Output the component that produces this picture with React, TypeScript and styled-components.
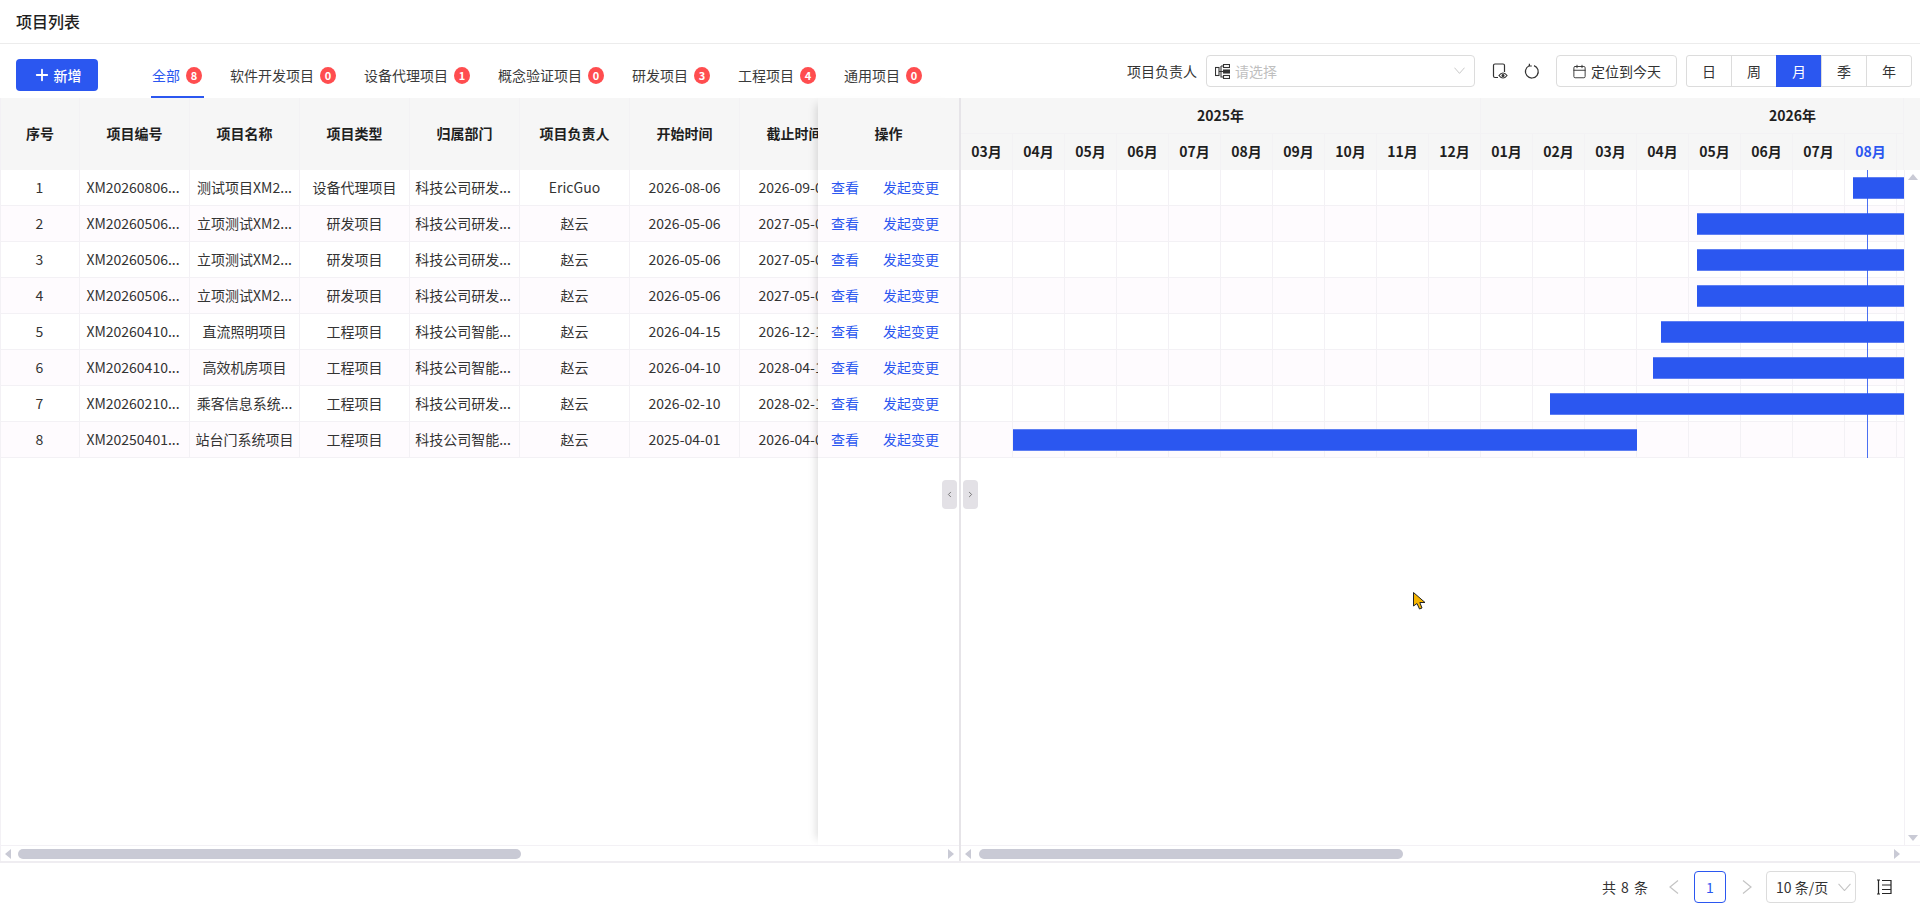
import React, { FC } from 'react';
import styled, { createGlobalStyle } from 'styled-components';
import { Calendar, ChevronLeft, ChevronRight, Plus } from 'lucide-react';

const BLUE = '#2b57f0';
const LINE = '#f3f1f5';
const MONTH_WIDTH = 52;
const TODAY = '2026-08-14';

const GlobalStyle = createGlobalStyle`
  html, body {
    margin: 0;
    padding: 0;
    height: 100%;
    background: #fff;
    color: #262626;
    font-family: "Noto Sans CJK SC", "Liberation Sans", sans-serif;
    font-size: 14px;
    overflow: hidden;
  }
  * { box-sizing: border-box; }
`;

const Page = styled.div`
  position: relative;
  display: flex;
  flex-direction: column;
  height: 911px;
  overflow: hidden;
`;

const TitleBar = styled.div`
  flex: 0 0 44px;
  display: flex;
  align-items: center;
  padding: 0 16px 2px;
  border-bottom: 1px solid #ececec;
  font-size: 16px;
  font-weight: 500;
  color: #1f1f1f;
`;

const Toolbar = styled.div`
  flex: 0 0 54px;
  display: flex;
  align-items: center;
  padding: 0 8px 0 16px;
`;

const AddButton = styled.div`
  width: 82px;
  height: 32px;
  margin-top: 8px;
  display: flex;
  align-items: center;
  justify-content: center;
  gap: 3px;
  border-radius: 4px;
  background: ${BLUE};
  color: #fff;
  font-weight: 500;
`;

const Tabs = styled.div`
  align-self: stretch;
  display: flex;
  gap: 25px;
  margin-left: 53px;
`;

const Tab = styled.div<{ $active?: boolean }>`
  display: flex;
  align-items: center;
  gap: 6px;
  padding: 10px 2px 0 1px;
  border-bottom: 2px solid ${(p) => (p.$active ? BLUE : 'transparent')};
  color: ${(p) => (p.$active ? BLUE : '#3a3a3a')};
  white-space: nowrap;
`;

const Badge = styled.span`
  width: 16px;
  height: 17px;
  display: flex;
  align-items: center;
  justify-content: center;
  border-radius: 50%;
  background: #ff4d4f;
  color: #fff;
  font-size: 11px;
  font-weight: 700;
`;

const ToolRight = styled.div`
  margin-left: auto;
  display: flex;
  align-items: center;
`;

const FieldLabel = styled.span`
  margin-right: 9px;
  color: #333;
  white-space: nowrap;
`;

const SelectBox = styled.div`
  width: 269px;
  height: 32px;
  display: flex;
  align-items: center;
  padding: 0 9px 0 8px;
  gap: 5px;
  border: 1px solid #dcdcdc;
  border-radius: 4px;
  color: #bfbfbf;
`;

const Caret = styled.span`
  margin-left: auto;
  display: flex;
  color: #c4c4c4;
`;

const IconButton = styled.span`
  display: flex;
  margin-left: ${(p: { $gap: number }) => p.$gap}px;
  color: #333;
`;

const TodayButton = styled.div`
  width: 121px;
  height: 32px;
  margin-left: 16px;
  display: flex;
  align-items: center;
  justify-content: center;
  gap: 4px;
  border: 1px solid #dcdcdc;
  border-radius: 4px;
  color: #333;
`;

const Segments = styled.div`
  display: flex;
  width: 226px;
  height: 32px;
  margin-left: 9px;
  border: 1px solid #dcdcdc;
  border-radius: 3px;
`;

const Segment = styled.div<{ $active?: boolean }>`
  flex: 1;
  display: flex;
  align-items: center;
  justify-content: center;
  background: ${(p) => (p.$active ? BLUE : 'transparent')};
  color: ${(p) => (p.$active ? '#fff' : '#333')};
  border-left: 1px solid ${(p) => (p.$active ? BLUE : '#dcdcdc')};
  margin: ${(p) => (p.$active ? '-1px 0' : '0')};
  &:first-child { border-left: 0; }
`;

const Workspace = styled.div`
  position: relative;
  flex: 1;
  display: flex;
  min-height: 0;
  border-bottom: 2px solid #efedf1;
`;

const TablePane = styled.div`
  flex: 0 0 959px;
  min-width: 0;
  display: flex;
  flex-direction: column;
  border-left: 1px solid ${LINE};
`;

const TableColumns = styled.div`
  flex: 1;
  min-height: 0;
  display: flex;
`;

const ScrollPart = styled.div`
  flex: 1;
  min-width: 0;
  overflow: hidden;
`;

const FixedPart = styled.div`
  flex: 0 0 141px;
  position: relative;
  background: #fff;
  box-shadow: -8px 0 8px -6px rgba(0, 0, 0, 0.13);
`;

const HeadRow = styled.div`
  display: flex;
  width: max-content;
  height: 72px;
  background: #f6f6f6;
`;

const HeadCell = styled.div<{ $w: number }>`
  flex: 0 0 ${(p) => p.$w}px;
  display: flex;
  align-items: center;
  justify-content: center;
  padding-bottom: 2px;
  border-right: 1px solid #f3f2f4;
  font-weight: 700;
  color: #1f1f1f;
`;

const BodyRow = styled.div<{ $even: boolean }>`
  display: flex;
  width: max-content;
  height: 36px;
  background: ${(p) => (p.$even ? '#fefbfe' : '#fff')};
  border-bottom: 1px solid ${LINE};
`;

const Cell = styled.div<{ $w: number; $pr: number }>`
  flex: 0 0 ${(p) => p.$w}px;
  width: ${(p) => p.$w}px;
  padding-right: ${(p) => p.$pr}px;
  line-height: 35px;
  text-align: center;
  white-space: nowrap;
  border-right: 1px solid ${LINE};
  color: #333;
`;

const FixedHead = styled(HeadCell)`
  height: 72px;
  background: #f6f6f6;
  border-right: 0;
`;

const ActionRow = styled.div<{ $even: boolean }>`
  height: 36px;
  display: flex;
  align-items: center;
  gap: 24px;
  padding: 0 0 1px 13px;
  background: ${(p) => (p.$even ? '#fefbfe' : '#fff')};
  border-bottom: 1px solid ${LINE};
`;

const ActionLink = styled.span`
  color: ${BLUE};
  white-space: nowrap;
`;

const Splitter = styled.div`
  flex: 0 0 2px;
  background: #e6e4e8;
`;

const CollapseButton = styled.div<{ $side: 'left' | 'right' }>`
  position: absolute;
  top: 382px;
  left: ${(p) => (p.$side === 'left' ? 942 : 963)}px;
  width: 15px;
  height: 29px;
  display: flex;
  align-items: center;
  justify-content: center;
  border-radius: 4px;
  background: #e3e1e6;
  color: #555;
`;

const GanttPane = styled.div`
  flex: 1;
  min-width: 0;
  display: flex;
  flex-direction: column;
`;

const GanttHead = styled.div`
  flex: 0 0 72px;
  background: #f6f6f6;
  padding-right: 16px;
`;

const Timeline = styled.div`
  height: 100%;
  overflow: hidden;
  border-right: 1px solid #f3f2f4;
`;

const YearRow = styled.div`
  display: flex;
  width: max-content;
  height: 35px;
`;

const YearCell = styled.div<{ $months: number }>`
  flex: 0 0 ${(p) => p.$months * MONTH_WIDTH}px;
  display: flex;
  align-items: center;
  justify-content: center;
  padding-bottom: 2px;
  border-right: 1px solid #f3f2f4;
  font-weight: 700;
  color: #1f1f1f;
`;

const MonthRow = styled.div`
  display: flex;
  width: max-content;
  height: 37px;
  border-top: 1px solid #f3f2f4;
`;

const MonthCell = styled.div<{ $now?: boolean }>`
  flex: 0 0 ${MONTH_WIDTH}px;
  display: flex;
  align-items: center;
  justify-content: center;
  padding-bottom: 2px;
  border-right: 1px solid #f3f2f4;
  font-weight: 700;
  color: ${(p) => (p.$now ? BLUE : '#1f1f1f')};
`;

const GanttMiddle = styled.div`
  flex: 1;
  min-height: 0;
  display: flex;
`;

const GanttBody = styled.div`
  flex: 1;
  min-width: 0;
`;

const GanttRows = styled.div`
  position: relative;
  overflow: hidden;
`;

const GanttRow = styled.div<{ $even: boolean }>`
  position: relative;
  height: 36px;
  border-bottom: 1px solid ${LINE};
  background-color: ${(p) => (p.$even ? '#fefbfe' : '#fff')};
  background-image: repeating-linear-gradient(
    to right,
    transparent 0 ${MONTH_WIDTH - 1}px,
    ${LINE} ${MONTH_WIDTH - 1}px ${MONTH_WIDTH}px
  );
`;

const Bar = styled.div`
  position: absolute;
  top: 7px;
  height: 22px;
  background: ${BLUE};
  box-shadow: inset 0 1px 0 #5f7ff3, inset 0 -1px 0 #5f7ff3;
`;

const TodayLine = styled.div`
  position: absolute;
  top: 0;
  bottom: 0;
  width: 1px;
  background: ${BLUE};
  opacity: 0.85;
`;

const VScroll = styled.div`
  flex: 0 0 16px;
  display: flex;
  flex-direction: column;
  align-items: center;
  justify-content: space-between;
  padding: 4px 0 4px;
  border-left: 1px solid ${LINE};
`;

const VArrow = styled.span<{ $dir: 'up' | 'down' }>`
  width: 0;
  height: 0;
  border-left: 5px solid transparent;
  border-right: 5px solid transparent;
  ${(p) => (p.$dir === 'up' ? 'border-bottom: 6px solid #c9cad5;' : 'border-top: 6px solid #c9cad5;')}
`;

const HScroll = styled.div<{ $right: number }>`
  flex: 0 0 16px;
  display: flex;
  align-items: center;
  padding: 0 ${(p) => p.$right}px 0 4px;
  border-top: 1px solid ${LINE};
`;

const HArrow = styled.span<{ $dir: 'left' | 'right' }>`
  width: 0;
  height: 0;
  border-top: 5px solid transparent;
  border-bottom: 5px solid transparent;
  ${(p) =>
    p.$dir === 'left'
      ? 'border-right: 6px solid #c9cad5;'
      : 'border-left: 6px solid #c9cad5; margin-left: auto;'}
`;

const Thumb = styled.div<{ $w: number; $gap: number }>`
  width: ${(p) => p.$w}px;
  height: 10px;
  margin-left: ${(p) => p.$gap}px;
  border-radius: 5px;
  background: #c9cad5;
`;

const Footer = styled.div`
  flex: 0 0 48px;
  display: flex;
  align-items: center;
  justify-content: flex-end;
  padding-right: 28px;
  color: #333;
`;

const TotalText = styled.span`
  word-spacing: 2px;
`;

const PageNav = styled.span<{ $gap: number }>`
  display: flex;
  margin-left: ${(p) => p.$gap}px;
  color: #c4c4c4;
`;

const PageNumber = styled.div`
  width: 32px;
  height: 32px;
  margin-left: 15px;
  display: flex;
  align-items: center;
  justify-content: center;
  border: 1px solid ${BLUE};
  border-radius: 4px;
  color: ${BLUE};
`;

const PageSize = styled.div`
  width: 90px;
  height: 32px;
  margin-left: 14px;
  display: flex;
  align-items: center;
  padding: 0 4px 0 9px;
  border: 1px solid #dcdcdc;
  border-radius: 4px;
  white-space: nowrap;
`;

const Pointer = styled.svg`
  position: absolute;
  left: 1412px;
  top: 591px;
`;

const columns = [
  { title: '序号', w: 79, pr: 1 },
  { title: '项目编号', w: 110, pr: 3 },
  { title: '项目名称', w: 110, pr: 0 },
  { title: '项目类型', w: 110, pr: 0 },
  { title: '归属部门', w: 110, pr: 3 },
  { title: '项目负责人', w: 110, pr: 0 },
  { title: '开始时间', w: 110, pr: 0 },
  { title: '截止时间', w: 110, pr: 0 },
];

const rows = [
  ['1', 'XM20260806...', '测试项目XM2...', '设备代理项目', '科技公司研发...', 'EricGuo', '2026-08-06', '2026-09-06'],
  ['2', 'XM20260506...', '立项测试XM2...', '研发项目', '科技公司研发...', '赵云', '2026-05-06', '2027-05-06'],
  ['3', 'XM20260506...', '立项测试XM2...', '研发项目', '科技公司研发...', '赵云', '2026-05-06', '2027-05-06'],
  ['4', 'XM20260506...', '立项测试XM2...', '研发项目', '科技公司研发...', '赵云', '2026-05-06', '2027-05-06'],
  ['5', 'XM20260410...', '直流照明项目', '工程项目', '科技公司智能...', '赵云', '2026-04-15', '2026-12-15'],
  ['6', 'XM20260410...', '高效机房项目', '工程项目', '科技公司智能...', '赵云', '2026-04-10', '2028-04-10'],
  ['7', 'XM20260210...', '乘客信息系统...', '工程项目', '科技公司研发...', '赵云', '2026-02-10', '2028-02-10'],
  ['8', 'XM20250401...', '站台门系统项目', '工程项目', '科技公司智能...', '赵云', '2025-04-01', '2026-04-01'],
];

const tabs = [
  { label: '全部', count: 8 },
  { label: '软件开发项目', count: 0 },
  { label: '设备代理项目', count: 1 },
  { label: '概念验证项目', count: 0 },
  { label: '研发项目', count: 3 },
  { label: '工程项目', count: 4 },
  { label: '通用项目', count: 0 },
];

const months = ['03', '04', '05', '06', '07', '08', '09', '10', '11', '12', '01', '02', '03', '04', '05', '06', '07', '08', '09'];

// 日期换算成时间轴上的像素位置，时间轴从 2025-03 开始
const dateToX = (date: string) => {
  const [y, m, d] = date.split('-').map(Number);
  const days = new Date(y, m, 0).getDate();
  return ((y - 2025) * 12 + m - 3 + (d - 1) / days) * MONTH_WIDTH;
};

const OrgIcon = () => (
  <svg width="15" height="15" viewBox="0 0 15 15" fill="none" stroke="#333" strokeWidth="1.1">
    <rect x="0.5" y="3.5" width="3.5" height="8" />
    <rect x="8.5" y="0.5" width="6" height="3" />
    <rect x="8.5" y="6" width="6" height="3" fill="#333" />
    <rect x="8.5" y="11.5" width="6" height="3" />
    <path d="M4 7.5H8.5M6 2V13H8.5M6 2H8.5" />
  </svg>
);

const PreviewIcon = () => (
  <svg width="16" height="16" viewBox="0 0 16 16" fill="none" stroke="#333" strokeWidth="1.2">
    <path d="M6 14.5H3a1.5 1.5 0 0 1-1.5-1.5V2.5A1.5 1.5 0 0 1 3 1h8a1.5 1.5 0 0 1 1.5 1.5V9" />
    <path d="M7 12.5c1.2-1.7 2.6-2.5 4-2.5s2.8.8 4 2.5c-1.2 1.7-2.6 2.5-4 2.5s-2.8-.8-4-2.5Z" />
    <circle cx="11" cy="12.5" r="1" fill="#333" />
  </svg>
);

const ReloadIcon = () => (
  <svg width="16" height="16" viewBox="0 0 16 16" fill="none" stroke="#333" strokeWidth="1.2">
    <path d="M10 2.6a6.4 6.4 0 1 1-4.8.2" />
    <path d="M5.4 0.8v2.2h2.4" />
  </svg>
);

const ColumnHeightIcon = () => (
  <svg width="16" height="16" viewBox="0 0 16 16" fill="none" stroke="#262626" strokeWidth="1.2">
    <path d="M1 1h3M1 15h3M2.5 1v14" />
    <path d="M6 1.5h9v13H6M6 6h9M6 10.5h9" />
  </svg>
);

const CaretIcon = ({ w }: { w: number }) => (
  <svg width={w} height={w * 0.65} viewBox="0 0 13 8.5" fill="none" stroke="currentColor" strokeWidth="1.1">
    <path d="M0.5 0.8L6.5 7.6L12.5 0.8" />
  </svg>
);

const PageArrow = ({ dir }: { dir: 'prev' | 'next' }) => (
  <svg width="10" height="14" viewBox="0 0 10 14" fill="none" stroke="currentColor" strokeWidth="1.2">
    <path d={dir === 'prev' ? 'M9 0.5L1 7L9 13.5' : 'M1 0.5L9 7L1 13.5'} />
  </svg>
);

const App: FC = () => {
  const todayX = dateToX(TODAY);
  return (
    <Page>
      <GlobalStyle />
      <TitleBar>项目列表</TitleBar>
      <Toolbar>
        <AddButton>
          <Plus size={18} strokeWidth={2.4} />
          新增
        </AddButton>
        <Tabs>
          {tabs.map((t, i) => (
            <Tab key={t.label} $active={i === 0}>
              {t.label}
              <Badge>{t.count}</Badge>
            </Tab>
          ))}
        </Tabs>
        <ToolRight>
          <FieldLabel>项目负责人</FieldLabel>
          <SelectBox>
            <OrgIcon />
            请选择
            <Caret>
              <CaretIcon w={11} />
            </Caret>
          </SelectBox>
          <IconButton $gap={17}>
            <PreviewIcon />
          </IconButton>
          <IconButton $gap={16}>
            <ReloadIcon />
          </IconButton>
          <TodayButton>
            <Calendar size={15} strokeWidth={1.5} />
            定位到今天
          </TodayButton>
          <Segments>
            {['日', '周', '月', '季', '年'].map((s) => (
              <Segment key={s} $active={s === '月'}>
                {s}
              </Segment>
            ))}
          </Segments>
        </ToolRight>
      </Toolbar>
      <Workspace>
        <TablePane>
          <TableColumns>
            <ScrollPart>
              <HeadRow>
                {columns.map((c) => (
                  <HeadCell key={c.title} $w={c.w}>
                    {c.title}
                  </HeadCell>
                ))}
              </HeadRow>
              {rows.map((r, i) => (
                <BodyRow key={r[0]} $even={i % 2 === 1}>
                  {r.map((v, j) => (
                    <Cell key={j} $w={columns[j].w} $pr={columns[j].pr}>
                      {v}
                    </Cell>
                  ))}
                </BodyRow>
              ))}
            </ScrollPart>
            <FixedPart>
              <FixedHead $w={72}>操作</FixedHead>
              {rows.map((r, i) => (
                <ActionRow key={r[0]} $even={i % 2 === 1}>
                  <ActionLink>查看</ActionLink>
                  <ActionLink>发起变更</ActionLink>
                </ActionRow>
              ))}
            </FixedPart>
          </TableColumns>
          <HScroll $right={5}>
            <HArrow $dir="left" />
            <Thumb $w={503} $gap={7} />
            <HArrow $dir="right" />
          </HScroll>
        </TablePane>
        <Splitter />
        <GanttPane>
          <GanttHead>
            <Timeline>
              <YearRow>
                <YearCell $months={10}>2025年</YearCell>
                <YearCell $months={12}>2026年</YearCell>
              </YearRow>
              <MonthRow>
                {months.map((m, i) => (
                  <MonthCell key={i} $now={i === 17}>
                    {i === 18 ? '' : `${m}月`}
                  </MonthCell>
                ))}
              </MonthRow>
            </Timeline>
          </GanttHead>
          <GanttMiddle>
            <GanttBody>
              <GanttRows>
                {rows.map((r, i) => {
                  const left = dateToX(r[6]);
                  return (
                    <GanttRow key={r[0]} $even={i % 2 === 1}>
                      <Bar style={{ left, width: dateToX(r[7]) - left }} />
                    </GanttRow>
                  );
                })}
                <TodayLine style={{ left: todayX }} />
              </GanttRows>
            </GanttBody>
            <VScroll>
              <VArrow $dir="up" />
              <VArrow $dir="down" />
            </VScroll>
          </GanttMiddle>
          <HScroll $right={20}>
            <HArrow $dir="left" />
            <Thumb $w={424} $gap={8} />
            <HArrow $dir="right" />
          </HScroll>
        </GanttPane>
        <CollapseButton $side="left">
          <ChevronLeft size={9} strokeWidth={2} />
        </CollapseButton>
        <CollapseButton $side="right">
          <ChevronRight size={9} strokeWidth={2} />
        </CollapseButton>
      </Workspace>
      <Footer>
        <TotalText>共 8 条</TotalText>
        <PageNav $gap={21}>
          <PageArrow dir="prev" />
        </PageNav>
        <PageNumber>1</PageNumber>
        <PageNav $gap={16}>
          <PageArrow dir="next" />
        </PageNav>
        <PageSize>
          10 条/页
          <Caret>
            <CaretIcon w={13} />
          </Caret>
        </PageSize>
        <IconButton $gap={20}>
          <ColumnHeightIcon />
        </IconButton>
      </Footer>
      <Pointer width="15" height="20" viewBox="0 0 15 20">
        <path d="M1.5 1.5V15L5 12.5 7.5 18 10 17 7.8 11.5H13Z" fill="#f5b400" stroke="#222" strokeWidth="1" />
      </Pointer>
    </Page>
  );
};

export default App;
